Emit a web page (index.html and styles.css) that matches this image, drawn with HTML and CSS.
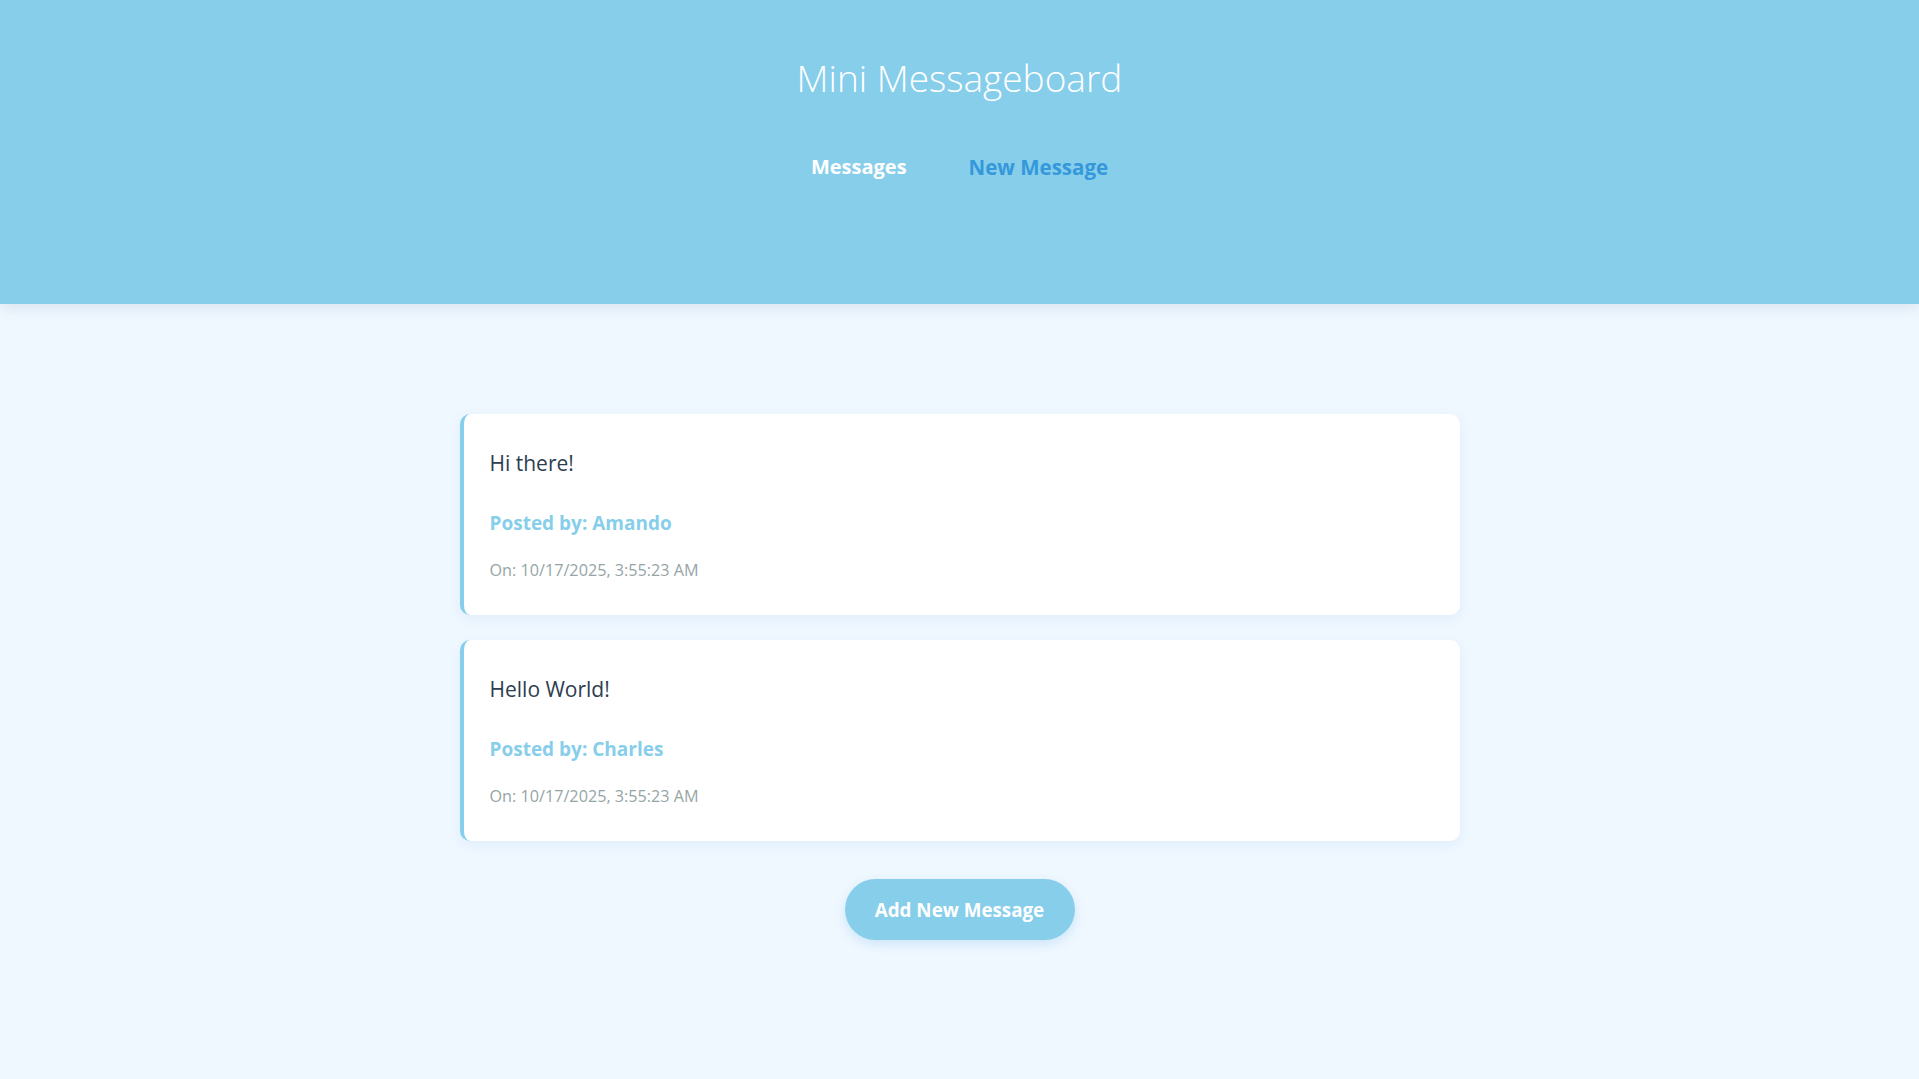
FILE: index.html
```html
<!DOCTYPE html>
<html lang="en">
<head>
<meta charset="utf-8">
<title>Mini Messageboard</title>
<link rel="stylesheet" href="styles.css">
</head>
<body>
<header class="site-header">
  <h1 class="title">Mini Messageboard</h1>
  <nav class="nav">
    <a class="nav-link" href="#">Messages</a>
    <a class="nav-link nav-link-accent" href="#">New Message</a>
  </nav>
</header>
<main class="main">
  <section class="messages">
    <article class="card">
      <p class="msg-text">Hi there!</p>
      <p class="msg-user">Posted by: Amando</p>
      <p class="msg-date">On: 10/17/2025, 3:55:23 AM</p>
    </article>
    <article class="card">
      <p class="msg-text">Hello World!</p>
      <p class="msg-user">Posted by: Charles</p>
      <p class="msg-date">On: 10/17/2025, 3:55:23 AM</p>
    </article>
  </section>
  <div class="actions">
    <a class="btn" href="#">Add New Message</a>
  </div>
</main>
</body>
</html>
```
FILE: styles.css
```css
* { box-sizing: border-box; }
html, body { margin: 0; padding: 0; }
body {
  background: #f0f8ff;
  font-family: "Open Sans", "Noto Sans", sans-serif;
  color: #2c3e50;
  min-height: 1079px;
}
.site-header {
  background: #87ceeb;
  height: 304px;
  padding-top: 50px;
  text-align: center;
  box-shadow: 0 4px 14px rgba(60, 90, 130, 0.12);
  position: relative;
}
.title {
  margin: 0;
  font-weight: 300;
  font-size: 37px;
  line-height: 56px;
  color: #ffffff;
}
.nav {
  margin-top: 46px;
  display: flex;
  justify-content: center;
  gap: 62px;
}
.nav-link {
  font-size: 20px;
  font-weight: 700;
  line-height: 30px;
  color: #ffffff;
  text-decoration: none;
}
.nav-link-accent { color: #3498db; font-size: 20.5px; }
.main {
  padding-top: 110px;
  display: flex;
  flex-direction: column;
  align-items: center;
}
.messages {
  width: 1000px;
  display: flex;
  flex-direction: column;
  gap: 25px;
}
.card {
  background: #ffffff;
  border-left: 4px solid #87ceeb;
  border-radius: 10px;
  padding: 25px 25px 25px 26px;
  height: 201px;
  box-shadow: 0 4px 14px rgba(100, 160, 220, 0.12);
}
.card p { margin: 0; }
.msg-text {
  margin-top: 10px !important;
  font-size: 21px;
  line-height: 28px;
  color: #2c3e50;
}
.msg-user {
  margin-top: 32px !important;
  font-size: 19px;
  font-weight: 700;
  line-height: 28px;
  color: #87ceeb;
}
.msg-date {
  margin-top: 21px !important;
  font-size: 16.2px;
  line-height: 24px;
  color: #95a5a6;
}
.actions {
  margin-top: 38px;
}
.btn {
  display: inline-flex;
  align-items: center;
  justify-content: center;
  width: 230px;
  height: 61px;
  border-radius: 31px;
  background: #87ceeb;
  color: #ffffff;
  font-size: 18.8px;
  font-weight: 700;
  text-decoration: none;
  box-shadow: 0 4px 12px rgba(100, 170, 230, 0.25);
}
```
